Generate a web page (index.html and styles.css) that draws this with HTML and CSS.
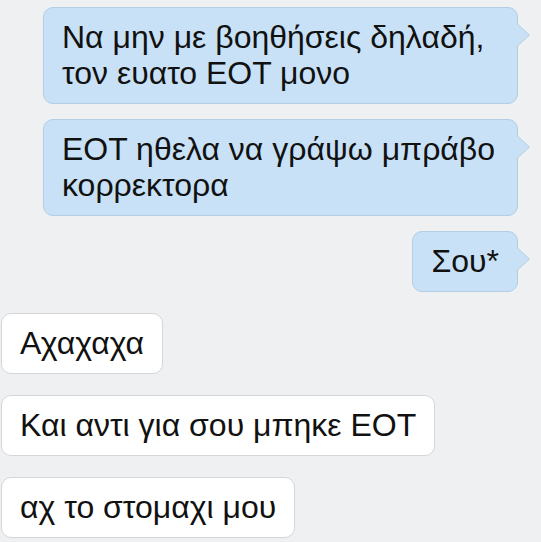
FILE: index.html
```html
<!DOCTYPE html>
<html lang="el">
<head>
    <meta charset="utf-8">
    <meta name="viewport" content="width=device-width,initial-scale=1.0">
    <link rel="stylesheet" href="styles.css">
</head>
<body>
    <div class="thread">
        <div class="msg out">Να μην με βοηθήσεις δηλαδή, τον ευατο ΕΟΤ μονο</div>
        <div class="msg out">ΕΟΤ ηθελα να γράψω μπράβο κορρεκτορα</div>
        <div class="msg out">Σου*</div>
        <div class="msg in">Αχαχαχα</div>
        <div class="msg in">Και αντι για σου μπηκε ΕΟΤ</div>
        <div class="msg in">αχ το στομαχι μου</div>
    </div>
</body>
</html>
```

FILE: styles.css
```css
html, body {margin: 0; padding: 0; background: #eef0f2;}
body {font-family: "Liberation Sans", Arial, sans-serif; color: #111;}
.thread {display: flex; flex-direction: column; padding: 7px 23px 0 1px;}
.msg {position: relative; box-sizing: border-box; max-width: 475px; font-size: 32px; line-height: 36px; padding: 11px 18px 12px 18px; border-radius: 10px;}
.out {align-self: flex-end; background: #c8e1f7; border: 1px solid #b3cde4; margin-bottom: 15px;}
.out::after {content: ""; position: absolute; right: -12px; top: 16px; border-style: solid; border-width: 11px 0 11px 12px; border-color: transparent transparent transparent #c8e1f7;}
.out::before {content: ""; position: absolute; right: -13px; top: 16px; border-style: solid; border-width: 11px 0 11px 12px; border-color: transparent transparent transparent #b3cde4;}
.out + .in {margin-top: 6px;}
.in {align-self: flex-start; background: #fff; border: 1px solid #d4d7da; margin-bottom: 21px;}
```
